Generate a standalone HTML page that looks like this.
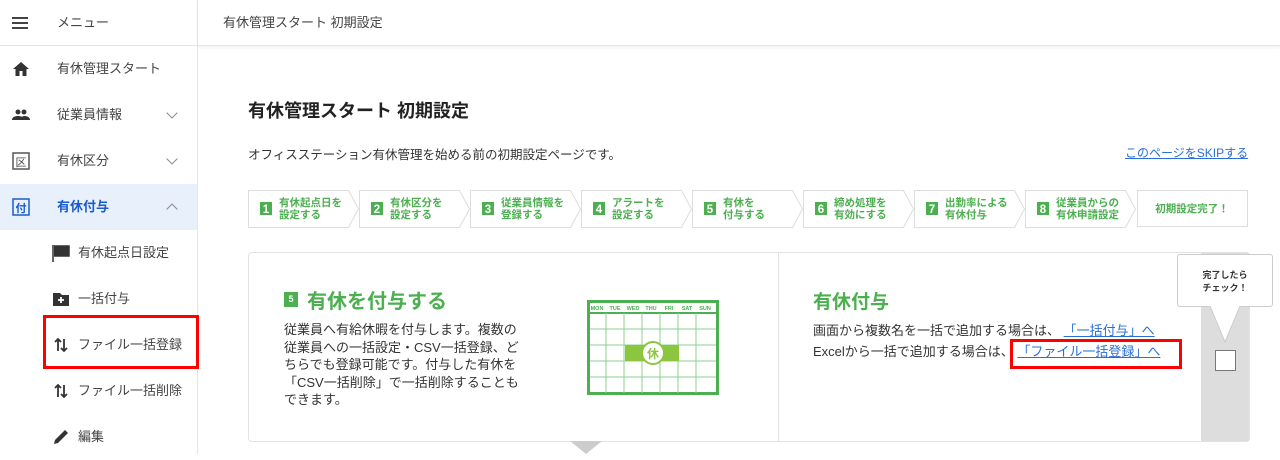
<!DOCTYPE html>
<html><head><meta charset="utf-8"><style>
*{box-sizing:border-box;margin:0;padding:0}
body{width:1280px;height:454px;overflow:hidden;background:#fff;font-family:"Liberation Sans","Noto Sans CJK JP",sans-serif;color:#333;position:relative}
.sb{position:absolute;left:0;top:0;width:198px;height:454px;border-right:1px solid #e6e6e6;background:#fff}
.hd{position:absolute;left:198px;top:0;right:0;height:46px;border-bottom:1px solid #e6e6e6;box-shadow:0 2px 3px rgba(0,0,0,.05);font-size:13px;line-height:46px;padding-left:25px;color:#444}
.it{position:absolute;left:0;width:197px;height:46px;font-size:13px;line-height:46px;color:#444}
.it .ic{position:absolute;left:12px;top:14px;width:18px;height:18px}
.it .tx{position:absolute;left:57px}
.it .ch{position:absolute;left:168px;top:17px;width:8px;height:8px;border-right:1.5px solid #888;border-bottom:1.5px solid #888;transform:rotate(45deg)}
.sub .ic{left:52px}
.sub .tx{left:78px}
.card{position:absolute;left:248px;top:252px;width:1002px;height:190px;border:1px solid #e2e2e2;border-radius:4px;background:#fff}
a{color:#2a6fd6;text-decoration:underline}
</style></head><body>
<div class="sb">
 <div class="it" style="top:0;border-bottom:1px solid #e6e6e6;height:46px">
  <svg class="ic" style="top:14px;left:11px" viewBox="0 0 18 18"><path d="M1 4h16M1 9h16M1 14h16" stroke="#444" stroke-width="2"/></svg><span class="tx">メニュー</span></div>
 <div class="it" style="top:46px"><svg class="ic" viewBox="0 0 18 18"><path d="M9 2L1 9h2.5v7h4v-5h3v5h4V9H17z" fill="#333"/></svg><span class="tx">有休管理スタート</span></div>
 <div class="it" style="top:92px"><svg class="ic" viewBox="0 0 18 18"><circle cx="6" cy="6" r="2.5" fill="#333"/><circle cx="12" cy="6" r="2.5" fill="#333"/><path d="M0 14c0-3 3-4 6-4s6 1 6 4zM9 14c0-2 1-4 3-4 3 0 6 1 6 4z" fill="#333"/></svg><span class="tx">従業員情報</span><span class="ch"></span></div>
 <div class="it" style="top:138px"><svg class="ic" viewBox="0 0 18 18"><rect x="1" y="1" width="16" height="16" fill="none" stroke="#555" stroke-width="1.5"/><text x="9" y="14" font-size="11" text-anchor="middle" fill="#444">区</text></svg><span class="tx">有休区分</span><span class="ch"></span></div>
 <div class="it" style="top:184px;background:#e8f0fb;color:#1a5bd1;font-weight:bold"><svg class="ic" viewBox="0 0 18 18"><rect x="1" y="1" width="16" height="16" fill="none" stroke="#1a5bd1" stroke-width="1.5"/><text x="9" y="14" font-size="11" text-anchor="middle" fill="#1a5bd1">付</text></svg><span class="tx">有休付与</span><span class="ch" style="transform:rotate(-135deg);top:21px;border-color:#888"></span></div>
 <div class="it sub" style="top:230px"><svg class="ic" viewBox="0 0 18 18"><path d="M1 1v17M2 2h15v10H2" fill="#333" stroke="#333" stroke-width="1.5"/></svg><span class="tx">有休起点日設定</span></div>
 <div class="it sub" style="top:276px"><svg class="ic" viewBox="0 0 18 18"><path d="M1 3h7l2 2h7v11H1z" fill="#333"/><path d="M9 7v6M6 10h6" stroke="#fff" stroke-width="1.8"/></svg><span class="tx">一括付与</span></div>
 <div class="it sub" style="top:322px"><svg class="ic" viewBox="0 0 18 18"><path d="M6 15V3M3 6l3-3 3 3M12 3v12M9 12l3 3 3-3" stroke="#333" stroke-width="1.8" fill="none"/></svg><span class="tx">ファイル一括登録</span></div>
 <div class="it sub" style="top:368px"><svg class="ic" viewBox="0 0 18 18"><path d="M6 15V3M3 6l3-3 3 3M12 3v12M9 12l3 3 3-3" stroke="#333" stroke-width="1.8" fill="none"/></svg><span class="tx">ファイル一括削除</span></div>
 <div class="it sub" style="top:414px"><svg class="ic" viewBox="0 0 18 18"><path d="M2 16l1-4L13 2l3 3L6 15z" fill="#333"/></svg><span class="tx">編集</span></div>
</div>
<div style="position:absolute;left:43px;top:315px;width:156px;height:54px;border:3px solid #f00"></div>
<div class="hd">有休管理スタート 初期設定</div>
<div style="position:absolute;left:248px;top:97px;font-size:18px;font-weight:bold;color:#222">有休管理スタート 初期設定</div>
<div style="position:absolute;left:248px;top:144px;font-size:12.5px;color:#333">オフィスステーション有休管理を始める前の初期設定ページです。</div>
<div style="position:absolute;left:1125px;top:144px;font-size:12px"><a>このページをSKIPする</a></div>
<svg style="position:absolute;left:248px;top:190px" width="1000" height="38" viewBox="0 0 1000 38" font-family="Liberation Sans,Noto Sans CJK JP,sans-serif">
 <g fill="#fff" stroke="#ddd">
  <path d="M0.5 .5h100l10 18.5-10 18.5H.5z"/><path d="M111.5 .5h100l10 18.5-10 18.5h-100z"/><path d="M222.5 .5h100l10 18.5-10 18.5h-100z"/><path d="M333.5 .5h100l10 18.5-10 18.5h-100z"/><path d="M444.5 .5h100l10 18.5-10 18.5h-100z"/><path d="M555.5 .5h100l10 18.5-10 18.5h-100z"/><path d="M666.5 .5h100l10 18.5-10 18.5h-100z"/><path d="M777.5 .5h100l10 18.5-10 18.5h-100z"/><path d="M889.5 .5h110v36h-110z"/>
 </g>
 <g fill="#4caf50">
  <rect x="12" y="12" width="12" height="13"/><rect x="123" y="12" width="12" height="13"/><rect x="234" y="12" width="12" height="13"/><rect x="345" y="12" width="12" height="13"/><rect x="456" y="12" width="12" height="13"/><rect x="567" y="12" width="12" height="13"/><rect x="678" y="12" width="12" height="13"/><rect x="789" y="12" width="12" height="13"/>
 </g>
 <g fill="#fff" font-size="11.5" font-weight="bold" text-anchor="middle">
  <text x="18" y="23">1</text><text x="129" y="23">2</text><text x="240" y="23">3</text><text x="351" y="23">4</text><text x="462" y="23">5</text><text x="573" y="23">6</text><text x="684" y="23">7</text><text x="795" y="23">8</text>
 </g>
 <g fill="#4caf50" font-size="10.5" font-weight="bold">
  <text x="31" y="16">有休起点日を</text><text x="31" y="28">設定する</text>
  <text x="142" y="16">有休区分を</text><text x="142" y="28">設定する</text>
  <text x="253" y="16">従業員情報を</text><text x="253" y="28">登録する</text>
  <text x="364" y="16">アラートを</text><text x="364" y="28">設定する</text>
  <text x="475" y="16">有休を</text><text x="475" y="28">付与する</text>
  <text x="586" y="16">締め処理を</text><text x="586" y="28">有効にする</text>
  <text x="697" y="16">出勤率による</text><text x="697" y="28">有休付与</text>
  <text x="808" y="16">従業員からの</text><text x="808" y="28">有休申請設定</text>
  <text x="944" y="22" text-anchor="middle">初期設定完了！</text>
 </g>
</svg>
<div class="card"></div>
<div style="position:absolute;left:778px;top:253px;width:1px;height:188px;background:#e2e2e2"></div>
<div style="position:absolute;left:1201px;top:253px;width:48px;height:188px;background:#ddd"></div>
<svg style="position:absolute;left:570px;top:441px" width="32" height="13"><path d="M0 0h32L16 13z" fill="#ccc"/></svg>
<div style="position:absolute;left:284px;top:292px;width:14px;height:15px;background:#4caf50;color:#fff;font-size:9px;font-weight:bold;text-align:center;line-height:15px">5</div>
<div style="position:absolute;left:307px;top:285px;font-size:20px;font-weight:bold;color:#4caf50">有休を付与する</div>
<div style="position:absolute;left:284px;top:321px;font-size:13px;line-height:17.5px;color:#333;width:260px">従業員へ有給休暇を付与します。複数の<br>従業員への一括設定・CSV一括登録、ど<br>ちらでも登録可能です。付与した有休を<br>「CSV一括削除」で一括削除することも<br>できます。</div>
<svg style="position:absolute;left:587px;top:300px" width="132" height="95" viewBox="0 0 132 95">
 <rect x="1.5" y="1.5" width="129" height="92" fill="#fff" stroke="#4caf50" stroke-width="3"/>
 <line x1="1" y1="13" x2="131" y2="13" stroke="#4caf50" stroke-width="2"/>
 <g stroke="#8fd08f" stroke-width="1"><path d="M19 13v80M37 13v80M55 13v80M73 13v80M91 13v80M109 13v80M3 29h126M3 45h126M3 61h126M3 77h126"/></g>
 <g font-size="5.5" font-weight="bold" fill="#4caf50" text-anchor="middle"><text x="10" y="10">MON</text><text x="28" y="10">TUE</text><text x="46" y="10">WED</text><text x="64" y="10">THU</text><text x="82" y="10">FRI</text><text x="100" y="10">SAT</text><text x="118" y="10">SUN</text></g>
 <rect x="38" y="45" width="54" height="16" fill="#8cc63f"/>
 <circle cx="66" cy="53" r="11" fill="#fff" stroke="#8cc63f" stroke-width="2"/>
 <text x="66" y="58" font-size="12" font-weight="bold" fill="#8cc63f" text-anchor="middle">休</text>
</svg>
<div style="position:absolute;left:813px;top:287px;font-size:19px;font-weight:bold;color:#4caf50">有休付与</div>
<div style="position:absolute;left:813px;top:321px;font-size:13px;line-height:20.5px;color:#333;white-space:nowrap">画面から複数名を一括で追加する場合は、 <a>「一括付与」へ</a><br>Excelから一括で追加する場合は、 <a>「ファイル一括登録」へ</a></div>
<div style="position:absolute;left:1010px;top:339px;width:172px;height:30px;border:3px solid #f00"></div>
<div style="position:absolute;left:1177px;top:254px;width:96px;height:53px;background:#fff;border:1px solid #ccc;border-radius:3px;font-size:9px;font-weight:bold;text-align:center;line-height:13px;padding-top:14px;color:#333">完了したら<br>チェック！</div>
<svg style="position:absolute;left:1210px;top:306px" width="30" height="40"><path d="M0 0L15 36 30 0" fill="#fff" stroke="#ccc"/><path d="M1 0h28" stroke="#fff" stroke-width="2"/></svg>
<div style="position:absolute;left:1215px;top:350px;width:21px;height:21px;background:#fff;border:1px solid #777"></div>
</body></html>
